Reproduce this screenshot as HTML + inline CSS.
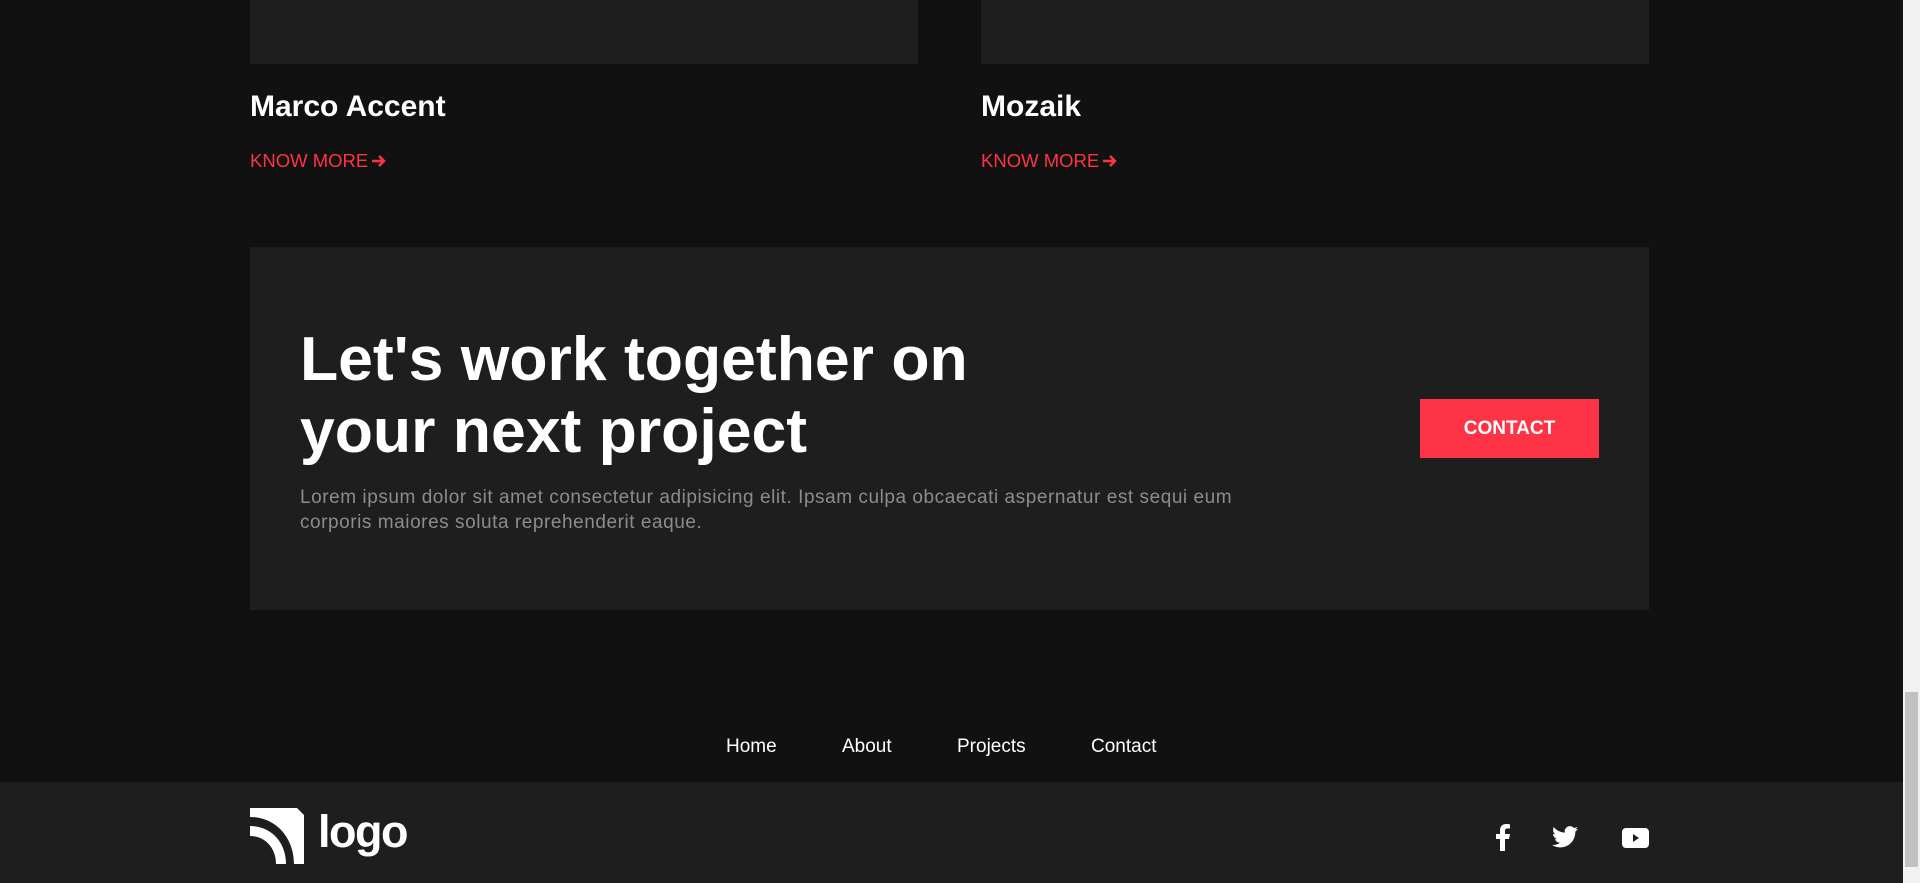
<!DOCTYPE html>
<html><head><meta charset="utf-8"><style>
*{margin:0;padding:0;box-sizing:border-box}
body{width:1920px;height:883px;overflow:hidden;background:#111;font-family:"Liberation Sans",Arial,sans-serif;position:relative;color:#fff}
.a{position:absolute}
.card{background:#1e1e1e;top:0;height:64px;width:668px}
.t{font-size:30px;font-weight:bold;top:90px}
.k{font-size:18.5px;color:#ff3346;top:150px}
.k svg{vertical-align:-2px;margin-left:3px}
.cta{left:250px;top:247px;width:1399px;height:363px;background:#1e1e1e}
h1{position:absolute;left:50px;top:76px;font-size:62.5px;line-height:72px;font-weight:bold}
p{position:absolute;left:50px;top:238px;width:960px;font-size:19px;letter-spacing:.55px;line-height:25px;color:#8c8c8c}
.btn{left:1170px;top:152px;width:179px;height:59px;background:#ff3346;font-size:19px;font-weight:bold;text-align:center;line-height:59px}
.nav{top:736px;font-size:19px}
.foot{left:0;top:782px;width:1903px;height:101px;background:#1e1e1e}
.sb{left:1903px;top:0;width:17px;height:883px;background:#f1f1f1}
</style></head><body>
<div class="a card" style="left:250px"></div>
<div class="a card" style="left:981px"></div>
<div class="a t" style="left:250px">Marco Accent</div>
<div class="a t" style="left:981px">Mozaik</div>
<div class="a k" style="left:250px">KNOW MORE<svg width="16" height="16" viewBox="0 0 16 16"><path d="M1 8H13M8 3L13 8L8 13" stroke="#ff3346" stroke-width="2.5" fill="none"/></svg></div>
<div class="a k" style="left:981px">KNOW MORE<svg width="16" height="16" viewBox="0 0 16 16"><path d="M1 8H13M8 3L13 8L8 13" stroke="#ff3346" stroke-width="2.5" fill="none"/></svg></div>
<div class="a cta">
<h1>Let's work together on<br>your next project</h1>
<p>Lorem ipsum dolor sit amet consectetur adipisicing elit. Ipsam culpa obcaecati aspernatur est sequi eum corporis maiores soluta reprehenderit eaque.</p>
<div class="a btn">CONTACT</div>
</div>
<div class="a nav" style="left:726px">Home</div>
<div class="a nav" style="left:842px">About</div>
<div class="a nav" style="left:957px">Projects</div>
<div class="a nav" style="left:1091px">Contact</div>
<div class="a foot">
<svg class="a" style="left:250px;top:26px" width="54" height="56" viewBox="0 0 54 56">
<path d="M0 0 H47 L54 7 V56 H44 C44 30 26 9 0 9 Z" fill="#fff"/>
<path d="M0 18 C21 18 36 34 36 56 H26 C26 40 15 28 0 28 Z" fill="#fff"/>
</svg>
<div class="a" style="left:318px;top:24px;font-size:45px;font-weight:bold;letter-spacing:-1.5px">logo</div>
<svg class="a" style="left:1495px;top:42px" width="16" height="27" viewBox="0 0 16 27"><path d="M10 27V15h4l1-5h-5V7c0-1.5.5-2.5 2.5-2.5H15V0.3C14.5.2 13 0 11.2 0 7.5 0 5 2.3 5 6.4V10H1v5h4v12z" fill="#fff"/></svg>
<svg class="a" style="left:1552px;top:44px" width="26" height="22" viewBox="0 0 24 20"><path d="M24 2.4c-.9.4-1.8.6-2.8.8 1-.6 1.8-1.6 2.2-2.7-1 .6-2 1-3.1 1.2C19.3.7 18 0 16.6 0c-2.7 0-4.9 2.2-4.9 4.9 0 .4 0 .8.1 1.1C7.7 5.8 4.1 3.9 1.7.9c-.4.7-.7 1.6-.7 2.5 0 1.7.9 3.2 2.2 4.1-.8 0-1.6-.2-2.2-.6v.1c0 2.4 1.7 4.4 3.9 4.8-.4.1-.8.2-1.3.2-.3 0-.6 0-.9-.1.6 2 2.4 3.4 4.6 3.4-1.7 1.3-3.8 2.1-6.1 2.1-.4 0-.8 0-1.2-.1C2.2 18.8 4.8 19.6 7.5 19.6c9.1 0 14-7.5 14-14v-.6c1-.7 1.8-1.6 2.5-2.6z" fill="#fff"/></svg>
<svg class="a" style="left:1622px;top:46px" width="27" height="20" viewBox="0 0 27 20"><rect width="27" height="20" rx="4" fill="#fff"/><path d="M11 6v8l6-4z" fill="#1e1e1e"/></svg>
</div>
<div class="a sb"><div class="a" style="left:2px;top:692px;width:13px;height:175px;background:#c1c1c1"></div></div>
</body></html>
